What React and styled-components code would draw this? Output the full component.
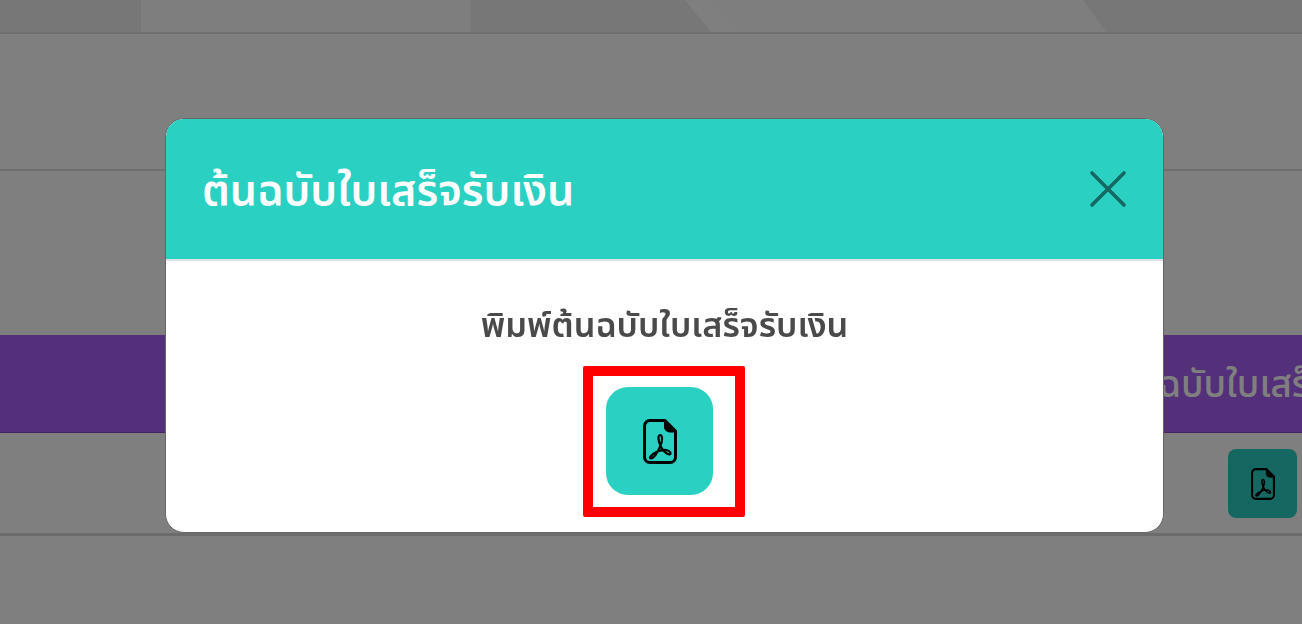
import styled, { createGlobalStyle } from "styled-components";

const GlobalStyle = createGlobalStyle`
  html, body {
    margin: 0;
    padding: 0;
    height: 100%;
    overflow: hidden;
    background: #fff;
    font-family: "Noto Sans Thai", "Noto Sans", "Open Sans", "DejaVu Sans", sans-serif;
  }
  * { box-sizing: border-box; }
`;

const Page = styled.div`
  width: 100%;
  height: 624px;
  overflow: hidden;
  background: #fff;
`;

const TabStrip = styled.div`
  display: flex;
  height: 34px;
  border-bottom: 2px solid #dcdcdc;
  overflow: hidden;
`;

const Tab = styled.div`
  width: ${(p) => p.$width}px;
  flex: ${(p) => (p.$grow ? 1 : "none")};
  background: ${(p) => (p.$light ? "#fdfdfd" : "#eeeeee")};
  clip-path: ${(p) => p.$clip || "none"};
  margin-right: ${(p) => p.$overlap || 0}px;
`;

const TextRow = styled.div`
  height: 137px;
  border-bottom: 2px solid #dcdcdc;
`;

const PurpleBar = styled.div`
  height: 98px;
  margin-top: 164px;
  padding: 4px 0 0 1112px;
  display: flex;
  align-items: center;
  background: #aa60f4;
  border-bottom: 1px solid #8a4dc8;
  overflow: hidden;
`;

const BarTitle = styled.span`
  flex: none;
  font-size: 36.8px;
  font-weight: 500;
  color: #fff;
  white-space: nowrap;
`;

const DocRow = styled.div`
  height: 103px;
  display: flex;
  justify-content: flex-end;
  align-items: center;
  padding: 1px 5px 0 0;
  border-bottom: 3px solid #d8d8d8;
`;

const RowButton = styled.button`
  width: 69px;
  height: 69px;
  display: flex;
  align-items: center;
  justify-content: center;
  padding: 0;
  border: none;
  border-radius: 8px;
  background: #2ad0c2;
`;

const Backdrop = styled.div`
  position: fixed;
  inset: 0;
  background: rgba(0, 0, 0, 0.5);
`;

const Modal = styled.div`
  position: absolute;
  left: 165px;
  top: 118px;
  width: 999px;
  height: 415px;
  display: flex;
  flex-direction: column;
  overflow: hidden;
  border: 1px solid #666;
  border-radius: 19px;
  background: #fff;
`;

const ModalHeader = styled.div`
  height: 142px;
  flex: none;
  display: flex;
  align-items: center;
  justify-content: space-between;
  padding: 0 35px 0 36px;
  background: #2ad0c2;
  border-bottom: 2px solid #dee2e6;
`;

const ModalTitle = styled.h2`
  margin: 5px 0 0;
  font-size: 43px;
  font-weight: 600;
  color: #fff;
`;

const CloseButton = styled.button`
  width: 40px;
  height: 40px;
  display: flex;
  padding: 0;
  border: none;
  background: transparent;
`;

const ModalBody = styled.div`
  flex: 1;
  display: flex;
  flex-direction: column;
  align-items: center;
  padding-top: 46px;
`;

const PrintLabel = styled.p`
  margin: 0 0 19px;
  font-size: 34.3px;
  line-height: 40px;
  font-weight: 600;
  color: #4a4a4a;
`;

const Highlight = styled.div`
  margin-right: 1px;
  padding: 11px 22px 12px 13px;
  border: 10px solid #ff0000;
  border-radius: 2px;
`;

const PrintButton = styled.button`
  width: 107px;
  height: 108px;
  display: flex;
  align-items: center;
  justify-content: center;
  padding: 0;
  border: none;
  border-radius: 22px;
  background: #2ad0c2;
`;

function PdfIcon({ width, height }) {
  return (
    <svg width={width} height={height} viewBox="0 0 34 45" fill="none">
      <path
        d="M7 1.5H22L32.5 12V38A5.5 5.5 0 0 1 27 43.5H7A5.5 5.5 0 0 1 1.5 38V7A5.5 5.5 0 0 1 7 1.5Z"
        stroke="#000"
        strokeWidth="3"
        strokeLinejoin="round"
      />
      <path d="M21.5 2V8C21.5 11 24 13 27 13H33Z" fill="#000" stroke="#000" strokeWidth="1" strokeLinejoin="round" />
      <path
        d="M17 16C15 16 14.8 21 17.5 27C20 32 24 35.5 26.5 35.5C28.5 35 27.5 31.5 23 31C17 30.5 10 34 7.5 37.5C6 39.5 8 40 10 38.5C14 35.5 19.5 24 19 19C18.8 17 18 16 17 16Z"
        stroke="#000"
        strokeWidth="2.2"
        strokeLinejoin="round"
      />
    </svg>
  );
}

function CloseIcon() {
  return (
    <svg width="40" height="40" viewBox="0 0 40 40" fill="none">
      <path d="M4 4L36 36M36 4L4 36" stroke="rgba(0,0,0,0.5)" strokeWidth="3.6" strokeLinecap="round" />
    </svg>
  );
}

export default function App() {
  return (
    <Page>
      <GlobalStyle />
      <TabStrip>
        <Tab $width={141} />
        <Tab $width={330} $light />
        <Tab $width={240} $clip="polygon(0 0, 214px 0, 100% 100%, 0 100%)" />
        <Tab $width={395} $light $overlap={-24} $clip="polygon(0 0, 372px 0, 100% 100%, 26px 100%)" />
        <Tab $grow />
      </TabStrip>
      <TextRow />
      <PurpleBar>
        <BarTitle>ต้นฉบับใบเสร็จรับเงิน</BarTitle>
      </PurpleBar>
      <DocRow>
        <RowButton>
          <PdfIcon width={24} height={32} />
        </RowButton>
      </DocRow>
      <Backdrop>
        <Modal>
          <ModalHeader>
            <ModalTitle>ต้นฉบับใบเสร็จรับเงิน</ModalTitle>
            <CloseButton>
              <CloseIcon />
            </CloseButton>
          </ModalHeader>
          <ModalBody>
            <PrintLabel>พิมพ์ต้นฉบับใบเสร็จรับเงิน</PrintLabel>
            <Highlight>
              <PrintButton>
                <PdfIcon width={34} height={45} />
              </PrintButton>
            </Highlight>
          </ModalBody>
        </Modal>
      </Backdrop>
    </Page>
  );
}
